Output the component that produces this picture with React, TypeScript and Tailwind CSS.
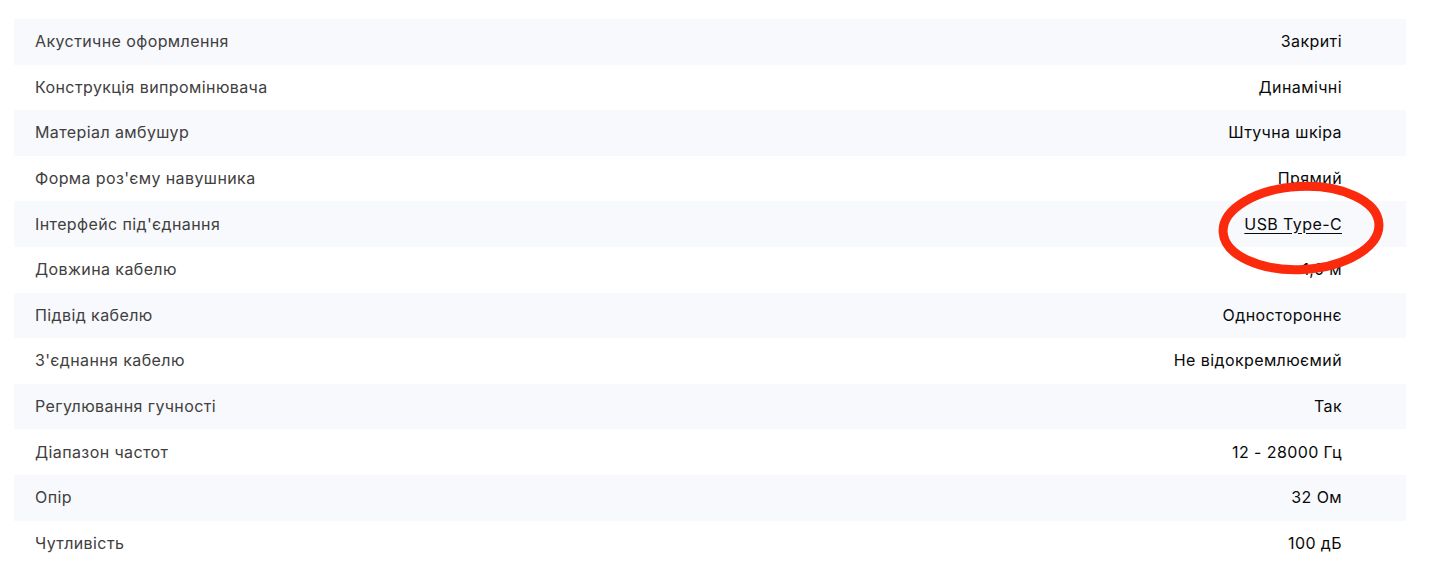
import React from "react";

const rows: [string, string, boolean?][] = [
  ["Акустичне оформлення", "Закриті"],
  ["Конструкція випромінювача", "Динамічні"],
  ["Матеріал амбушур", "Штучна шкіра"],
  ["Форма роз'єму навушника", "Прямий"],
  ["Інтерфейс під'єднання", "USB Type-C", true],
  ["Довжина кабелю", "1,0 м"],
  ["Підвід кабелю", "Одностороннє"],
  ["З'єднання кабелю", "Не відокремлюємий"],
  ["Регулювання гучності", "Так"],
  ["Діапазон частот", "12 - 28000 Гц"],
  ["Опір", "32 Ом"],
  ["Чутливість", "100 дБ"],
];

export default function App() {
  return (
    <div
      className="relative w-[1440px] h-[572px] bg-white overflow-hidden"
      style={{ fontFamily: "Inter, 'Noto Sans', sans-serif" }}
    >
      <div className="pt-[19px] pl-[14px] w-[1406px]">
        {rows.map(([k, v, link], i) => (
          <div
            key={k}
            className={`flex h-[45.6px] items-center justify-between pl-[21px] pr-[64px] text-[16px] tracking-[0.4px] ${
              i % 2 === 0 ? "bg-[#f8f9fd]" : "bg-white"
            }`}
          >
            <span className="text-[#404040] -mt-[1px]">{k}</span>
            {link ? (
              <a className="text-[#0a0a0a] underline underline-offset-[3px] -mt-[1px]" href="#">
                {v}
              </a>
            ) : (
              <span className="text-[#0a0a0a] -mt-[1px]">{v}</span>
            )}
          </div>
        ))}
      </div>
      <svg
        className="absolute left-[1210px] top-[177px] pointer-events-none"
        width="182"
        height="102"
        viewBox="0 0 182 102"
      >
        <ellipse
          cx="91"
          cy="51"
          rx="78"
          ry="41.5"
          fill="none"
          stroke="#fb2a0c"
          strokeWidth="9"
          transform="rotate(-3 91 51)"
        />
      </svg>
    </div>
  );
}
